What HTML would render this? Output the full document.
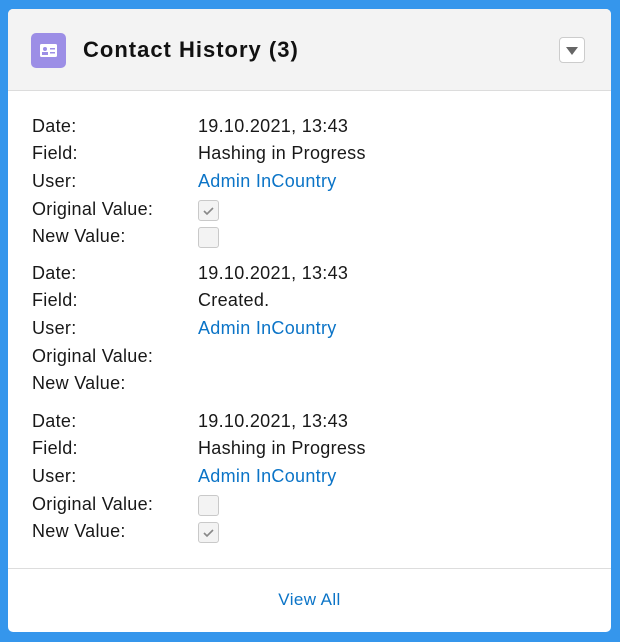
<!DOCTYPE html>
<html><head><style>
body{margin:0;width:620px;height:642px;background:#3596ec;font-family:"Liberation Sans",sans-serif;overflow:hidden}
.card{position:absolute;left:8px;top:9px;width:603px;height:623px;background:#fff;border-radius:5px;overflow:hidden}
.hd{height:81px;background:#f3f3f3;border-bottom:1px solid #dcdcdc;position:relative}
.ic{position:absolute;left:23px;top:24px;width:35px;height:35px;background:#9c8ee6;border-radius:5px}
.t{position:absolute;left:75px;top:28px;font-size:22px;letter-spacing:1px;font-weight:bold;color:#111;white-space:nowrap}
.dd{position:absolute;left:551px;top:28px;width:26px;height:26px;background:#fff;border:1px solid #ccc;border-radius:4px;box-sizing:border-box}
.dd:after{content:"";position:absolute;left:6px;top:9px;border-left:6px solid transparent;border-right:6px solid transparent;border-top:8px solid #666}
.r{position:absolute;font-size:18px;letter-spacing:0.3px;color:#181818;white-space:nowrap;margin-top:-1px}
.l{left:24px}.v{left:190px}
.a{color:#0b74c7}
.cb{position:absolute;left:190px;width:21px;height:21px;border:1px solid #c9c9c9;background:#f3f3f3;border-radius:3px;box-sizing:border-box}
.ft{position:absolute;left:0;top:559px;width:603px;border-top:1px solid #ddd;height:64px;text-align:center;line-height:62px;font-size:17px;letter-spacing:0.4px;color:#0b74c7}
</style></head><body>
<div class="card">
<div class="hd"><div class="ic"><svg width="35" height="35"><rect x="9" y="11" width="17" height="13" rx="1.5" fill="#fff"/><circle cx="14" cy="16" r="2" fill="#9c8ee6"/><rect x="11" y="19" width="6" height="3" fill="#9c8ee6"/><rect x="19" y="15" width="5" height="1.5" fill="#9c8ee6"/><rect x="19" y="19" width="5" height="1.5" fill="#9c8ee6"/></svg></div>
<div class="t">Contact History (3)</div><div class="dd"></div></div>
<div class="ft">View All</div>
</div>
<div style="position:absolute;left:8px;top:9px">
<div class="r l" style="top:108px">Date:</div><div class="r v" style="top:108px">19.10.2021, 13:43</div>
<div class="r l" style="top:135px">Field:</div><div class="r v" style="top:135px">Hashing in Progress</div>
<div class="r l" style="top:163px">User:</div><div class="r v a" style="top:163px">Admin InCountry</div>
<div class="r l" style="top:191px">Original Value:</div><div class="cb" style="top:191px"><svg width="19" height="19"><path d="M5 10l3 3 6-6" stroke="#888" stroke-width="1.6" fill="none"/></svg></div>
<div class="r l" style="top:218px">New Value:</div><div class="cb" style="top:218px"></div>

<div class="r l" style="top:255px">Date:</div><div class="r v" style="top:255px">19.10.2021, 13:43</div>
<div class="r l" style="top:282px">Field:</div><div class="r v" style="top:282px">Created.</div>
<div class="r l" style="top:310px">User:</div><div class="r v a" style="top:310px">Admin InCountry</div>
<div class="r l" style="top:338px">Original Value:</div>
<div class="r l" style="top:365px">New Value:</div>

<div class="r l" style="top:403px">Date:</div><div class="r v" style="top:403px">19.10.2021, 13:43</div>
<div class="r l" style="top:430px">Field:</div><div class="r v" style="top:430px">Hashing in Progress</div>
<div class="r l" style="top:458px">User:</div><div class="r v a" style="top:458px">Admin InCountry</div>
<div class="r l" style="top:486px">Original Value:</div><div class="cb" style="top:486px"></div>
<div class="r l" style="top:513px">New Value:</div><div class="cb" style="top:513px"><svg width="19" height="19"><path d="M5 10l3 3 6-6" stroke="#888" stroke-width="1.6" fill="none"/></svg></div>
</div>
</body></html>
